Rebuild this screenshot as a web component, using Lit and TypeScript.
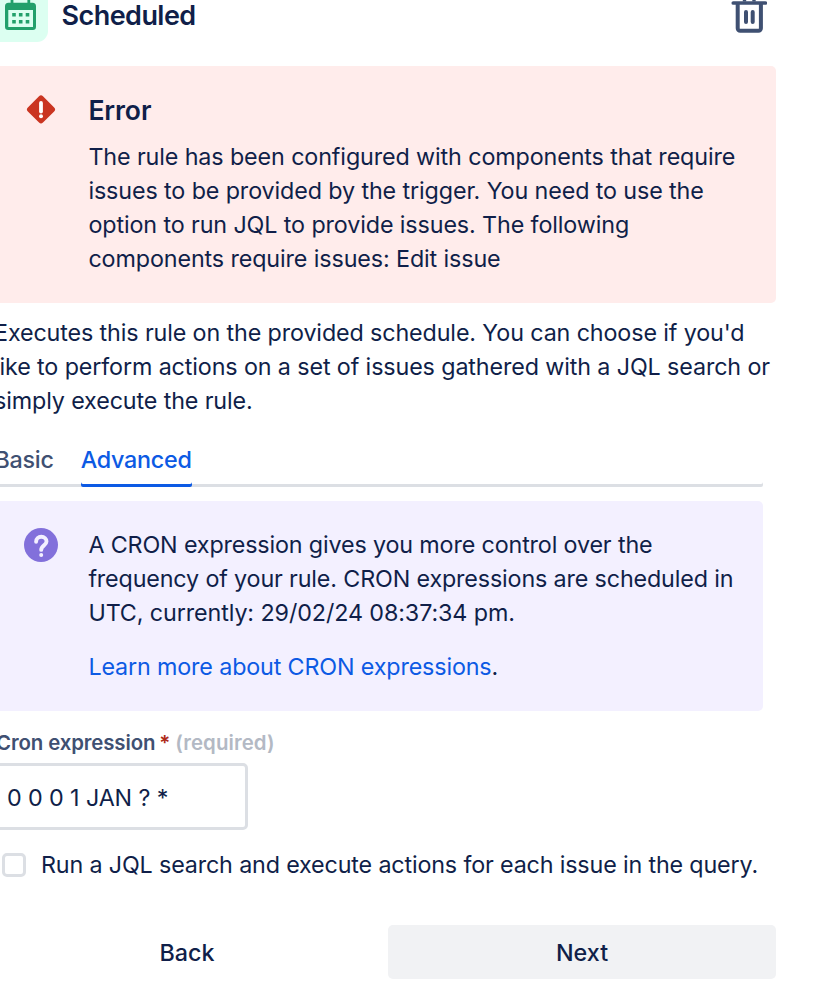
import { LitElement, html, css, svg } from 'lit';
import { customElement, property, state } from 'lit/decorators.js';

const calendarIcon = svg`
  <path d="M12 -3v10M28.800 -3v10" stroke="#22A06B" stroke-width="2.800" />
  <path d="M5 6.300a3.500 3.500 0 0 1 3.500-3.500h24a3.500 3.500 0 0 1 3.500 3.500v20.500a3.200 3.200 0 0 1-3.200 3.200h-24.600a3.200 3.200 0 0 1-3.200-3.200z" fill="#22A06B" />
  <path d="M8.300 10h24.700v17h-24.700z" fill="#DCFFF1" />
  <path d="M12.200 13h3.600v3.400h-3.600zM18.900 13h3.600v3.400h-3.600zM25.700 13h3.600v3.400h-3.600zM12.200 20h3.600v3.400h-3.600zM18.900 20h3.600v3.400h-3.600zM25.700 20h3.600v3.400h-3.600z" fill="#22A06B" />
`;

@customElement('message-panel')
export class MessagePanel extends LitElement {
  @property({ reflect: true })
  type: 'error' | 'help' = 'error';

  static styles = css`
    :host {
      display: flex;
      padding: 27px 27px 27px 0;
      border-radius: 0 5px 5px 0;
      box-sizing: border-box;
    }
    :host([type='error']) {
      background: #ffeceb;
      height: 237px;
    }
    :host([type='help']) {
      background: #f3f0ff;
      height: 210px;
    }
    .icon {
      flex: none;
      width: 41px;
      height: 34px;
      padding: 0 23.4px 0 24px;
    }
    .content {
      flex: 1;
    }
  `;

  render() {
    return html`
      <svg class="icon" viewBox="0 0 41 34">
        ${this.type === 'error'
          ? svg`
              <rect x="6.300" y="5.700" width="21.400" height="21.400" rx="2.800" transform="rotate(45 17 16.400)" fill="#CA3521" />
              <path d="M17 10v8.600" stroke="#fff" stroke-width="3.800" stroke-linecap="round" />
              <circle cx="17" cy="23.300" r="2" fill="#fff" />
            `
          : svg`
              <circle cx="17" cy="17" r="17" fill="#8270DB" />
              <path d="M12.100 13.700c0-2.900 2.200-4.900 5.200-4.900s5.200 1.900 5.200 4.700c0 4-5.300 3.800-5.300 8.400" fill="none" stroke="#F3F0FF" stroke-width="3.900" stroke-linecap="round" />
              <circle cx="17.200" cy="27" r="2" fill="#F3F0FF" />
            `}
      </svg>
      <div class="content"><slot></slot></div>
    `;
  }
}

@customElement('app-root')
export class AppRoot extends LitElement {
  @state()
  tab = 'Advanced';

  static styles = css`
    :host {
      display: block;
      width: 816px;
      height: 999px;
      overflow: hidden;
      background: #fff;
      color: #101f49;
      font: 400 23.3px/34px Inter, 'Liberation Sans', sans-serif;
      letter-spacing: -0.11px;
    }
    p,
    h2,
    h3 {
      margin: 0;
      white-space: nowrap;
    }
    .page {
      width: 776px;
    }
    .header {
      display: flex;
      height: 66px;
      align-items: flex-start;
    }
    .tile {
      width: 48px;
      height: 41.5px;
      background: #dcfff1;
      border-radius: 0 0 11px 0;
    }
    h2 {
      flex: 1;
      padding-left: 13.5px;
      font-size: 27px;
      font-weight: 600;
      line-height: 31px;
      letter-spacing: -0.55px;
    }
    .trash {
      width: 36px;
      height: 34px;
      margin-right: 9px;
    }
    h3 {
      margin-bottom: 13px;
      font-size: 26.5px;
      font-weight: 600;
      letter-spacing: -0.1px;
    }
    .description {
      margin: 13px 0 0 -6px;
      letter-spacing: -0.12px;
    }
    .tabs {
      display: flex;
      gap: 27px;
      width: 763px;
      height: 60px;
      margin: 9px 0 14px;
      box-sizing: border-box;
      font-weight: 500;
      letter-spacing: -0.25px;
      box-shadow: inset 0 -3px #dcdfe4;
      border-radius: 0 2px 2px 0;
    }
    .tab {
      padding-top: 16px;
      color: #3f5072;
      cursor: pointer;
    }
    .tab:first-child {
      margin-left: -5.5px;
    }
    .selected {
      color: #0c5ae4;
      box-shadow: inset 0 -3px #0c5ae4;
      border-radius: 2px;
    }
    .help {
      width: 763px;
      letter-spacing: -0.145px;
    }
    .clock {
      letter-spacing: -0.1px;
    }
    .more {
      margin-top: 20px;
    }
    a {
      color: #0c5ae4;
      text-decoration: none;
    }
    .label {
      margin: 19px 0 7px -4px;
      font-size: 20.4px;
      font-weight: 600;
      line-height: 26px;
      color: #3f5072;
    }
    .star {
      margin: 0 5px 0 4px;
      color: #ae2a19;
    }
    .required {
      color: #b3b9c4;
      letter-spacing: 0.1px;
    }
    input {
      display: block;
      width: 252.5px;
      height: 67px;
      margin-left: -5px;
      padding: 2px 9px 0;
      box-sizing: border-box;
      border: 3px solid #dcdfe4;
      border-radius: 5px;
      background: #fff;
      color: inherit;
      font: inherit;
      letter-spacing: inherit;
      outline: none;
    }
    .check {
      display: flex;
      align-items: center;
      gap: 15px;
      height: 34px;
      margin-top: 18px;
      padding-left: 2px;
      white-space: nowrap;
      letter-spacing: -0.155px;
    }
    .box {
      width: 24px;
      height: 24px;
      box-sizing: border-box;
      border: 3px solid #dcdfe4;
      border-radius: 5px;
    }
    .buttons {
      display: flex;
      margin: 43px 0 0 -14px;
    }
    button {
      height: 54px;
      flex: 1;
      padding: 2px 0 0;
      border: none;
      border-radius: 5px;
      background: transparent;
      color: inherit;
      font: inherit;
      font-weight: 500;
    }
    .back {
      flex: 0 0 402px;
    }
    .next {
      background: #f1f2f4;
    }
  `;

  private _renderTab(name: string) {
    return html`
      <div
        class="tab ${this.tab === name ? 'selected' : ''}"
        @click=${() => (this.tab = name)}
      >${name}</div>
    `;
  }

  render() {
    return html`
      <div class="page">
        <div class="header">
          <svg class="tile" viewBox="0 0 48 41.5">${calendarIcon}</svg>
          <h2>Scheduled</h2>
          <svg class="trash" viewBox="0 0 36 34" fill="none" stroke="#3F5072">
            <path d="M13.500 1.500V-2h9.500v3.500" stroke-width="3.400" />
            <path d="M2.300 3h32" stroke-width="3.700" stroke-linecap="round" />
            <path d="M6.700 4v24.300a2.500 2.500 0 0 0 2.500 2.500h18.200a2.500 2.500 0 0 0 2.500-2.500V4" stroke-width="4" />
            <path d="M15 12v10M21.700 12v10" stroke-width="4" stroke-linecap="round" />
          </svg>
        </div>

        <message-panel type="error">
          <h3>Error</h3>
          <p>
            The rule has been configured with components that require<br />
            issues to be provided by the trigger. You need to use the<br />
            option to run JQL to provide issues. The following<br />
            components require issues: Edit issue
          </p>
        </message-panel>

        <p class="description">
          Executes this rule on the provided schedule. You can choose if you'd<br />
          like to perform actions on a set of issues gathered with a JQL search or<br />
          simply execute the rule.
        </p>

        <div class="tabs">${['Basic', 'Advanced'].map((t) => this._renderTab(t))}</div>

        <message-panel class="help" type="help">
          <p>
            A CRON expression gives you more control over the<br />
            frequency of your rule. CRON expressions are scheduled in<br />
            <span class="clock">UTC, currently: 29/02/24 08:37:34 pm.</span>
          </p>
          <p class="more"><a href="#">Learn more about CRON expressions</a>.</p>
        </message-panel>

        <p class="label">
          Cron expression<span class="star">*</span><span class="required">(required)</span>
        </p>
        <input .value=${'0 0 0 1 JAN ? *'} />

        <div class="check">
          <span class="box"></span>
          <span>Run a JQL search and execute actions for each issue in the query.</span>
        </div>

        <div class="buttons">
          <button class="back">Back</button>
          <button class="next">Next</button>
        </div>
      </div>
    `;
  }
}
